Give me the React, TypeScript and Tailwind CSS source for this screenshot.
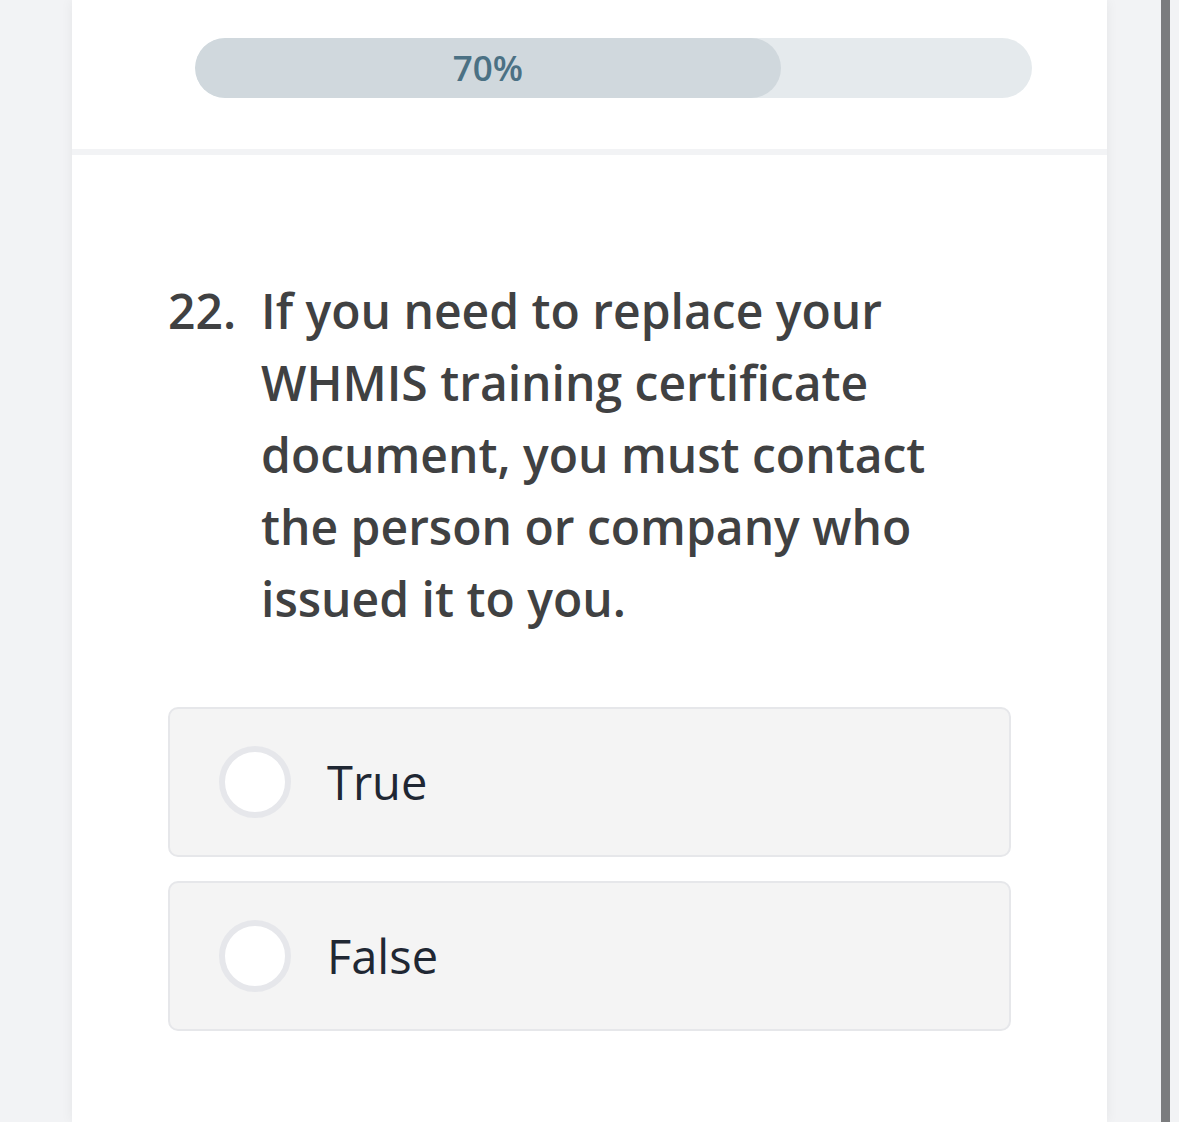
const answers = ["True", "False"];

function ProgressBar({ percent }: { percent: number }) {
  return (
    <div className="ml-[123px] mr-[75px] h-[60px] overflow-hidden rounded-full bg-[#e5eaed]">
      <div
        className="flex h-full items-center justify-center rounded-full bg-[#d0d8dd]"
        style={{ width: `${percent}%` }}
      >
        <span className="text-[35px] font-semibold text-[#4b7184]">{percent}%</span>
      </div>
    </div>
  );
}

function Option({ label }: { label: string }) {
  return (
    <label className="flex h-[150px] cursor-pointer items-center rounded-[10px] border-2 border-[#e6e7ea] bg-[#f4f4f4] pl-[49px]">
      <span className="h-[72px] w-[72px] shrink-0 rounded-full border-[6px] border-[#e6e7eb] bg-white" />
      <span className="ml-[36px] text-[47px] text-[#1f2733]">{label}</span>
    </label>
  );
}

export default function App() {
  return (
    <div
      className="flex h-[1122px] overflow-hidden bg-[#f2f3f5]"
      style={{ fontFamily: '"Open Sans", "Noto Sans", sans-serif' }}
    >
      <div className="w-[72px] shrink-0" />
      <main className="flex w-[1035px] shrink-0 flex-col bg-white shadow-[0_0_12px_rgba(0,0,0,0.06)]">
        <header className="h-[149px] pt-[38px]">
          <ProgressBar percent={70} />
        </header>
        <div className="h-[6px] bg-[#f2f3f5]" />
        <section className="px-[96px] pt-[120px]">
          <div className="flex text-[48px] leading-[72px] font-semibold text-[#404142]">
            <span className="w-[93px] shrink-0">22.</span>
            <p className="w-[700px]">
              If you need to replace your WHMIS training certificate document, you must contact the
              person or company who issued it to you.
            </p>
          </div>
          <div className="mt-[72px] flex flex-col gap-[24px]">
            {answers.map((a) => (
              <Option key={a} label={a} />
            ))}
          </div>
        </section>
      </main>
      <div className="w-[54px] shrink-0" />
      <div className="w-[9px] shrink-0 bg-[#7b7c7e]" />
      <div className="flex-1" />
    </div>
  );
}
